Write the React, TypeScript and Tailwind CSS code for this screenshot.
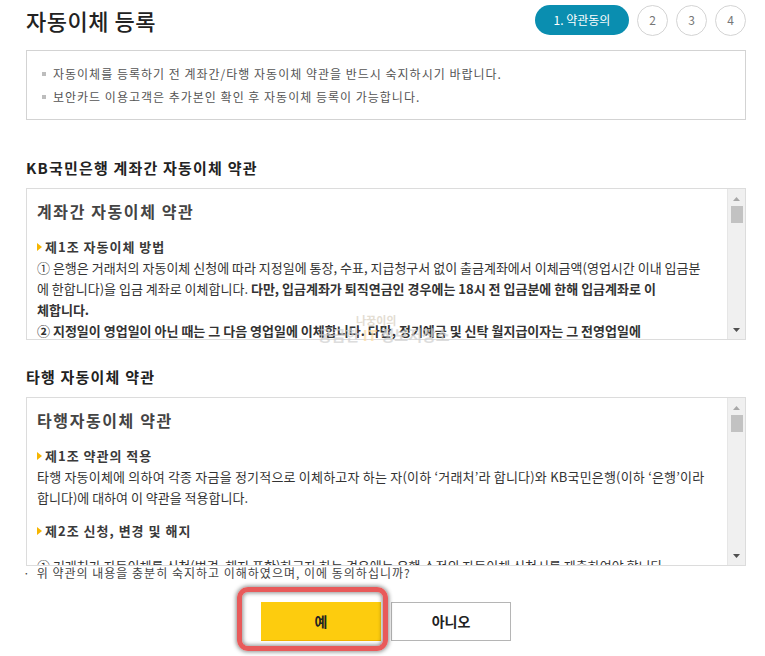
import React from "react";

const FONT = { fontFamily: '"Noto Sans CJK KR", "Noto Sans", sans-serif' };

function Scrollbar() {
  return (
    <div className="relative w-[18px] shrink-0 bg-[#f0f0f0] border-l border-[#e6e6e6]">
      <svg className="absolute left-[4px] top-[7px]" width="9" height="6" viewBox="0 0 9 6">
        <path d="M4.5 1 L8 5 L1 5 Z" fill="#a8a8a8" />
      </svg>
      <div className="absolute left-[3px] top-[17px] w-[12px] h-[17px] bg-[#c2c2c2]" />
      <svg className="absolute left-[4px] bottom-[6px]" width="9" height="6" viewBox="0 0 9 6">
        <path d="M1 1 L8 1 L4.5 5 Z" fill="#505050" />
      </svg>
    </div>
  );
}

function Article({ children, className = "" }: { children: React.ReactNode; className?: string }) {
  return (
    <div className={"flex items-center h-[21px] text-[13px] font-bold text-[#3a3a3a] tracking-[1px] whitespace-nowrap " + className}>
      <svg width="5" height="8" viewBox="0 0 5 8" className="mr-[3px]">
        <path d="M0 0 L5 4 L0 8 Z" fill="#f6b500" />
      </svg>
      {children}
    </div>
  );
}

function Line({ children, className = "" }: { children: React.ReactNode; className?: string }) {
  return <div className={"h-[21px] leading-[21px] text-[13px] text-[#333] whitespace-nowrap " + className}>{children}</div>;
}

export default function App() {
  return (
    <div className="w-[765px] h-[656px] bg-white overflow-hidden relative" style={FONT}>
      <div className="ml-[26px] w-[720px]">
        {/* header */}
        <div className="h-[40px] flex items-center justify-between">
          <h1 className="text-[22px] font-medium text-[#222] tracking-[0.5px] leading-none">자동이체 등록</h1>
          <div className="flex items-center gap-[8px]">
            <div className="w-[94px] h-[30px] rounded-full bg-[#0a8eb0] text-white text-[12px] flex items-center justify-center">
              1. 약관동의
            </div>
            <div className="w-[31px] h-[31px] rounded-full border border-[#d4d4d4] text-[12px] text-[#777] flex items-center justify-center">2</div>
            <div className="w-[31px] h-[31px] rounded-full border border-[#d4d4d4] text-[12px] text-[#777] flex items-center justify-center">3</div>
            <div className="w-[31px] h-[31px] rounded-full border border-[#d4d4d4] text-[12px] text-[#777] flex items-center justify-center">4</div>
          </div>
        </div>

        {/* notice */}
        <div className="mt-[10px] border border-[#d3d3d3] py-[11px] px-[15px]">
          <div className="flex items-center h-[23px] text-[12px] text-[#555] tracking-[1px]">
            <span className="w-[4px] h-[4px] bg-[#bdbdbd] mr-[7px]" />
            자동이체를 등록하기 전 계좌간/타행 자동이체 약관을 반드시 숙지하시기 바랍니다.
          </div>
          <div className="flex items-center h-[23px] text-[12px] text-[#555] tracking-[1px]">
            <span className="w-[4px] h-[4px] bg-[#bdbdbd] mr-[7px]" />
            보안카드 이용고객은 추가본인 확인 후 자동이체 등록이 가능합니다.
          </div>
        </div>

        {/* section 1 */}
        <h2 className="mt-[38px] h-[20px] leading-[20px] text-[15px] font-bold text-[#222] tracking-[1.2px]">KB국민은행 계좌간 자동이체 약관</h2>
        <div className="mt-[10px] h-[152px] border border-[#dcdcdc] flex">
          <div className="flex-1 overflow-hidden pl-[10px] pt-[11px]">
            <div className="h-[22px] leading-[22px] text-[16px] font-bold text-[#444] tracking-[1.6px]">계좌간 자동이체 약관</div>
            <Article className="mt-[14px]">제1조 자동이체 방법</Article>
            <Line>① 은행은 거래처의 자동이체 신청에 따라 지정일에 통장, 수표, 지급청구서 없이 출금계좌에서 이체금액(영업시간 이내 입금분</Line>
            <Line>
              에 한합니다)을 입금 계좌로 이체합니다. <b className="font-bold">다만, 입금계좌가 퇴직연금인 경우에는 18시 전 입금분에 한해 입금계좌로 이</b>
            </Line>
            <Line className="font-bold">체합니다.</Line>
            <Line className="font-bold">② 지정일이 영업일이 아닌 때는 그 다음 영업일에 이체합니다. 다만, 정기예금 및 신탁 월지급이자는 그 전영업일에</Line>
          </div>
          <Scrollbar />
        </div>

        {/* section 2 */}
        <h2 className="mt-[27px] h-[20px] leading-[20px] text-[15px] font-bold text-[#222] tracking-[1.2px]">타행 자동이체 약관</h2>
        <div className="mt-[10px] h-[169px] border border-[#dcdcdc] flex">
          <div className="flex-1 overflow-hidden pl-[10px] pt-[11px]">
            <div className="h-[22px] leading-[22px] text-[16px] font-bold text-[#444] tracking-[1.6px]">타행자동이체 약관</div>
            <Article className="mt-[14px]">제1조 약관의 적용</Article>
            <Line className="tracking-[0.2px]">타행 자동이체에 의하여 각종 자금을 정기적으로 이체하고자 하는 자(이하 ‘거래처’라 합니다)와 KB국민은행(이하 ‘은행’이라</Line>
            <Line>합니다)에 대하여 이 약관을 적용합니다.</Line>
            <Article className="mt-[12px]">제2조 신청, 변경 및 해지</Article>
            <Line className="mt-[14px]">① 거래처가 자동이체를 신청(변경, 해지 포함)하고자 하는 경우에는 은행 소정의 자동이체 신청서를 제출하여야 합니다.</Line>
          </div>
          <Scrollbar />
        </div>

        {/* question */}
        <div className="mt-[0px] flex items-center h-[14px] text-[12px] text-[#444] -ml-[3px] tracking-[1px]">
          <span className="mr-[6px]">·</span>
          위 약관의 내용을 충분히 숙지하고 이해하였으며, 이에 동의하십니까?
        </div>

        {/* buttons */}
        <div className="mt-[22px] flex justify-center gap-[10px]">
          <div className="relative">
            <div className="absolute left-[-24px] top-[-15px] w-[151px] h-[64px] rounded-[11px] border-[5px] border-[#e85a5a] shadow-[0_0_4px_1px_rgba(0,0,0,0.45),inset_0_0_4px_1px_rgba(0,0,0,0.45)]" />
            <button className="w-[120px] h-[39px] bg-[#fdcc0e] border-b border-[#f0b400] text-[14px] font-bold text-[#222]">예</button>
          </div>
          <button className="w-[120px] h-[39px] bg-white border border-[#b5b5b5] text-[14px] font-bold text-[#222]">아니오</button>
        </div>
      </div>

      {/* watermark */}
      <div className="absolute left-[318px] top-[314px] pointer-events-none select-none">
        <div className="ml-[38px] text-[11px] font-bold leading-[12px] text-[#d8cfc0] opacity-70">나꿍이의</div>
        <div className="text-[15px] font-bold leading-[18px] text-[#cfcfcf] opacity-70 whitespace-nowrap">
          궁금한 <span className="text-[#fbd9a0]">IT</span> 정보저장소
        </div>
      </div>
    </div>
  );
}
